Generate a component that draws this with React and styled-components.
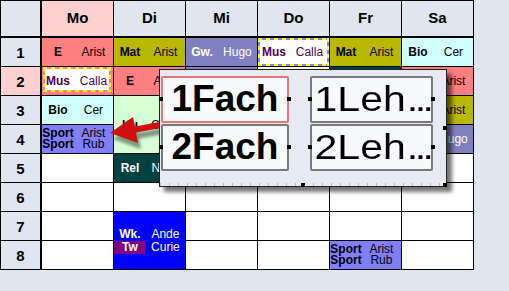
import React from 'react';
import styled, { createGlobalStyle, css } from 'styled-components';

const BG = '#e0e6f0';
const PINK = '#ffd0d0';
const SALMON = '#ff8080';
const OLIVE = '#b8b800';
const LAV = '#8080c0';
const SPORT = '#8080ff';
const CYAN = '#d0ffff';
const GREEN = '#d4ffd4';
const TEAL = '#004040';
const BLUE = '#0000ff';
const VIOLET = '#800080';
const PURP = '#580050';
const FONT = '"Liberation Sans", Arial, Helvetica, sans-serif';

const Global = createGlobalStyle`
  html, body { margin: 0; padding: 0; background: ${BG}; }
  body { font-family: ${FONT}; }
  * { box-sizing: border-box; }
`;

const Page = styled.div`
  position: relative;
  width: 509px;
  height: 291px;
  background: ${BG};
  overflow: hidden;
`;

const Timetable = styled.div`
  display: inline-grid;
  grid-template-columns: 40px repeat(6, 71px);
  grid-template-rows: 36px repeat(8, 28px);
  gap: 1px;
  padding: 1px;
  background: #000;
  font-family: ${FONT};
`;

const Corner = styled.div`
  background: ${BG};
  border-right: 1px solid #000;
  border-bottom: 1px solid #000;
`;

const DayHead = styled.div`
  background: ${(p) => (p.$active ? PINK : BG)};
  border-bottom: 1px solid #000;
  display: flex;
  align-items: center;
  justify-content: center;
  padding-bottom: 3px;
  font-weight: bold;
  font-size: 15px;
  color: #000;
`;

const RowHead = styled.div`
  background: ${(p) => (p.$active ? PINK : BG)};
  border-right: 1px solid #000;
  display: flex;
  align-items: center;
  justify-content: center;
  font-weight: bold;
  font-size: 15px;
  color: #000;
`;

const dashH = 'repeating-linear-gradient(90deg, #ffff00 0 4px, transparent 4px 8px)';
const dashV = 'repeating-linear-gradient(180deg, #ffff00 0 4px, transparent 4px 8px)';

const dashed = css`
  position: relative;
  &::before {
    content: '';
    position: absolute;
    top: ${(p) => p.$inset[0]}px;
    right: ${(p) => p.$inset[1]}px;
    bottom: ${(p) => p.$inset[2]}px;
    left: ${(p) => p.$inset[3]}px;
    padding: 2px;
    background-image: ${dashH}, ${dashH}, ${dashV}, ${dashV}, linear-gradient(#fff, #fff);
    background-position: top left, bottom left, top left, top right, 0 0;
    background-size: 100% 2px, 100% 2px, 2px 100%, 2px 100%, 100% 100%;
    background-repeat: no-repeat;
    background-clip: border-box, border-box, border-box, border-box, content-box;
  }
`;

const Slot = styled.div`
  background: ${(p) => p.$bg || '#fff'};
  grid-row: ${(p) => (p.$span ? `span ${p.$span}` : 'auto')};
  color: ${(p) => p.$fg || '#000'};
  display: flex;
  align-items: center;
  min-width: 0;
  overflow: hidden;
  ${(p) => p.$inset && dashed}
`;

const Lines = styled.div`
  position: relative;
  display: grid;
  grid-template-columns: 45% 55%;
  width: 100%;
  font-size: 12px;
  line-height: ${(p) => p.$lh}px;
`;

const Subj = styled.span`
  font-weight: bold;
  text-align: center;
  white-space: nowrap;
  background: ${(p) => p.$bg || 'transparent'};
`;

const Teach = styled.span`
  text-align: center;
  white-space: nowrap;
`;

const Popup = styled.div`
  position: absolute;
  left: 159px;
  top: 69px;
  width: 288px;
  height: 118px;
  border: 1px solid #222;
  background: #e5eaf3;
  box-shadow: 5px 5px 4px rgba(0, 0, 0, 0.55);
  display: grid;
  grid-template-columns: 128px 123px;
  grid-template-rows: 47px 47px;
  column-gap: 21px;
  row-gap: 1px;
  padding: 6px 13px 15px 1px;
  align-content: start;
`;

const Ruler = styled.div`
  position: absolute;
  left: 0;
  right: 0;
  bottom: 0;
  height: 3px;
  background: repeating-linear-gradient(90deg, #b4bccb 0 1px, transparent 1px 9px);
`;

const Field = styled.div`
  position: relative;
  border: 2px solid ${(p) => (p.$sel ? '#e87878' : '#7a7a7a')};
  border-radius: 2px;
  background: #f8f9fc;
  display: flex;
  align-items: center;
  justify-content: center;
  font-family: ${FONT};
  color: #000;
  padding-bottom: 1px;
  &::before,
  &::after {
    content: '';
    position: absolute;
    top: 50%;
    width: 4px;
    height: 4px;
    margin-top: -3px;
    background: #000;
  }
  &::before { left: -4px; }
  &::after { right: -4px; }
`;

const BoldLabel = styled.span`
  font-size: 37px;
  font-weight: bold;
`;

const WideLabel = styled.span`
  display: inline-block;
  font-size: 35px;
  font-weight: normal;
  white-space: nowrap;
  transform: scaleX(1.17);
  margin-left: 2px;
`;

const Dots = styled.span`
  letter-spacing: -3px;
  margin-left: 1px;
`;

const Handle = styled.div`
  position: absolute;
  width: 4px;
  height: 4px;
  background: #000;
  left: ${(p) => p.$x}px;
  top: ${(p) => p.$y}px;
`;

const ArrowLayer = styled.svg`
  position: absolute;
  left: 0;
  top: 0;
  pointer-events: none;
`;

const Lesson = ({ c }) => {
  const lines = c.lines || [[c.s, c.t]];
  const lh = c.lh || (lines.length > 1 ? 11 : 14);
  const hasText = c.s || c.lines;
  return (
    <Slot $bg={c.bg} $fg={c.fg} $span={c.span} $inset={c.inset}>
      {hasText && (
        <Lines $lh={lh}>
          {lines.map(([s, t, sbg], i) => (
            <React.Fragment key={i}>
              <Subj $bg={sbg}>{s}</Subj>
              <Teach>{t}</Teach>
            </React.Fragment>
          ))}
        </Lines>
      )}
    </Slot>
  );
};

const W = {};
const days = ['Mo', 'Di', 'Mi', 'Do', 'Fr', 'Sa'];

const grid = [
  [
    { s: 'E', t: 'Arist', bg: SALMON },
    { s: 'Mat', t: 'Arist', bg: OLIVE },
    { s: 'Gw.', t: 'Hugo', bg: LAV, fg: '#fff' },
    { s: 'Mus', t: 'Calla', bg: '#8484e8', fg: PURP, inset: [0, 0, 0, 0] },
    { s: 'Mat', t: 'Arist', bg: OLIVE },
    { s: 'Bio', t: 'Cer', bg: CYAN },
  ],
  [
    { s: 'Mus', t: 'Calla', bg: SALMON, fg: PURP, inset: [0, 2, 3, 1] },
    { s: 'E', t: 'Arist', bg: SALMON },
    { s: 'Gw.', t: 'Hugo', bg: LAV, fg: '#fff' },
    { bg: '#ffffd0' },
    { s: 'Rel', t: 'Nagy', bg: TEAL, fg: '#fff' },
    { s: 'E', t: 'Arist', bg: SALMON },
  ],
  [
    { s: 'Bio', t: 'Cer', bg: CYAN },
    { s: 'Ku', t: 'Curie', bg: GREEN, span: 2 },
    W, W, W,
    { s: 'Mat', t: 'Arist', bg: OLIVE },
  ],
  [
    { lines: [['Sport', 'Arist'], ['Sport', 'Rub']], bg: SPORT },
    W, W, W,
    { s: 'Gw.', t: 'Hugo', bg: LAV, fg: '#fff' },
  ],
  [W, { s: 'Rel', t: 'Nagy', bg: TEAL, fg: '#fff' }, W, W, W, W],
  [W, W, W, W, W, W],
  [
    W,
    { lines: [['Wk.', 'Ande'], ['Tw', 'Curie', VIOLET]], lh: 13, bg: BLUE, fg: '#fff', span: 2 },
    W, W, W, W,
  ],
  [
    W, W, W,
    { lines: [['Sport', 'Arist'], ['Sport', 'Rub']], bg: SPORT },
    W,
  ],
];

export default function App() {
  return (
    <Page>
      <Global />
      <Timetable>
        <Corner />
        {days.map((d, i) => (
          <DayHead key={d} $active={i === 0}>{d}</DayHead>
        ))}
        {grid.map((row, r) => (
          <React.Fragment key={r}>
            <RowHead $active={r === 1}>{r + 1}</RowHead>
            {row.map((c, i) => (
              <Lesson key={i} c={c} />
            ))}
          </React.Fragment>
        ))}
      </Timetable>

      <ArrowLayer width="509" height="291" viewBox="0 0 509 291">
        <defs>
          <filter id="sh" x="-30%" y="-30%" width="160%" height="160%">
            <feGaussianBlur stdDeviation="1.6" />
          </filter>
        </defs>
        <g transform="translate(3 6)" filter="url(#sh)" opacity="0.4">
          <line x1="165" y1="124" x2="128" y2="131" stroke="#000" strokeWidth="6" />
          <polygon points="110,133 133,117 138,143" fill="#000" />
        </g>
        <line x1="165" y1="124" x2="128" y2="131" stroke="#d01010" strokeWidth="6" />
        <polygon points="110,133 133,117 138,143" fill="#d01010" />
      </ArrowLayer>

      <Popup>
        <Field $sel><BoldLabel>1Fach</BoldLabel></Field>
        <Field><WideLabel>1Leh<Dots>...</Dots></WideLabel></Field>
        <Field><BoldLabel>2Fach</BoldLabel></Field>
        <Field><WideLabel>2Leh<Dots>...</Dots></WideLabel></Field>
        <Ruler />
        <Handle $x={141} $y={113} />
        <Handle $x={283} $y={113} />
        <Handle $x={283} $y={56} />
      </Popup>
    </Page>
  );
}
